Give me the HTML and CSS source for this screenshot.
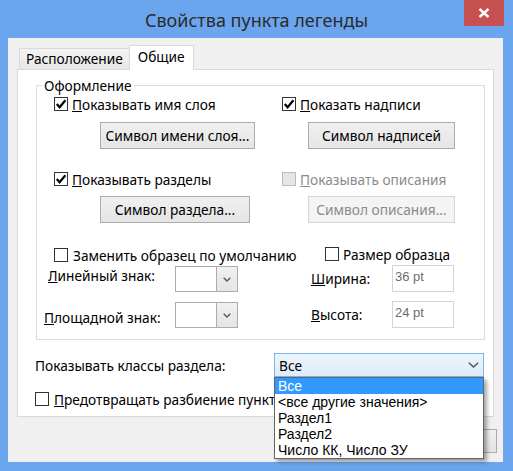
FILE: index.html
```html
<!DOCTYPE html>
<html lang="ru">
<head>
<meta charset="utf-8">
<title>Свойства пункта легенды</title>
<link rel="stylesheet" href="styles.css">
</head>
<body>
<div class="window">
  <div class="titlebar">
    <span class="spacer"></span>
    <div class="title">Свойства пункта легенды</div>
    <div class="close">
      <svg width="12" height="10" viewBox="0 0 12 10"><path d="M1.5 1 L10.5 9 M10.5 1 L1.5 9" stroke="#fff" stroke-width="2.4" fill="none"/></svg>
    </div>
  </div>
  <div class="client">
    <div class="tabs">
      <div class="tab">Расположение</div>
      <div class="tab active">Общие</div>
    </div>
    <div class="pane">
      <div class="group">
        <div class="legend">Оформление</div>

        <div class="row r1">
          <div class="cell left-cell">
            <div class="cb"><span class="box checked"><svg width="12" height="12" viewBox="0 0 12 12"><path d="M1.8 6 L4.6 9.2 L10.4 2.2" stroke="#000" stroke-width="2.2" fill="none"/></svg></span><span class="lbl"><u>П</u>оказывать имя слоя</span></div>
          </div>
          <div class="cell">
            <div class="cb"><span class="box checked"><svg width="12" height="12" viewBox="0 0 12 12"><path d="M1.8 6 L4.6 9.2 L10.4 2.2" stroke="#000" stroke-width="2.2" fill="none"/></svg></span><span class="lbl"><u>П</u>оказать надписи</span></div>
          </div>
        </div>

        <div class="row r2">
          <div class="cell"><div class="btn btn-left">Символ имени слоя...</div></div>
          <div class="cell"><div class="btn btn-right">Символ надписей</div></div>
        </div>

        <div class="row r3">
          <div class="cell left-cell">
            <div class="cb"><span class="box checked"><svg width="12" height="12" viewBox="0 0 12 12"><path d="M1.8 6 L4.6 9.2 L10.4 2.2" stroke="#000" stroke-width="2.2" fill="none"/></svg></span><span class="lbl"><u>П</u>оказывать разделы</span></div>
          </div>
          <div class="cell">
            <div class="cb disabled"><span class="box"></span><span class="lbl"><u>П</u>оказывать описания</span></div>
          </div>
        </div>

        <div class="row r4">
          <div class="cell"><div class="btn btn-left2">Символ раздела...</div></div>
          <div class="cell"><div class="btn btn-right disabled">Символ описания...</div></div>
        </div>

        <div class="row r5">
          <div class="cell left-cell">
            <div class="cb"><span class="box"></span><span class="lbl lbl-wide">Заменить образец по умолчанию</span></div>
          </div>
          <div class="cell size-cell">
            <div class="cb"><span class="box"></span><span class="lbl">Размер образца</span></div>
          </div>
        </div>

        <div class="row r6">
          <div class="cell flexcell">
            <span class="field-lbl lin"><u>Л</u>инейный знак:</span>
            <div class="mini-combo"><span class="mc-val"></span><span class="mc-btn"><svg width="8" height="5" viewBox="0 0 8 5"><path d="M0.7 0.7 L4 4 L7.3 0.7" stroke="#5a5a5a" stroke-width="1.4" fill="none"/></svg></span></div>
          </div>
          <div class="cell flexcell right-fields">
            <span class="dim-lbl"><u>Ш</u>ирина:</span>
            <div class="tbox">36 pt</div>
          </div>
        </div>

        <div class="row r7">
          <div class="cell flexcell">
            <span class="field-lbl plo"><u>П</u>лощадной знак:</span>
            <div class="mini-combo"><span class="mc-val"></span><span class="mc-btn"><svg width="8" height="5" viewBox="0 0 8 5"><path d="M0.7 0.7 L4 4 L7.3 0.7" stroke="#5a5a5a" stroke-width="1.4" fill="none"/></svg></span></div>
          </div>
          <div class="cell flexcell right-fields">
            <span class="dim-lbl"><u>В</u>ысота:</span>
            <div class="tbox">24 pt</div>
          </div>
        </div>
      </div>

      <div class="classes-row">
        <span class="classes-lbl">Показывать классы раздела:</span>
        <div class="big-combo">
          <span class="bc-val">Все</span>
          <svg class="bc-chev" width="11" height="6" viewBox="0 0 11 6"><path d="M0.8 0.8 L5.5 5 L10.2 0.8" stroke="#555" stroke-width="1.5" fill="none"/></svg>
          <ul class="dropdown">
            <li class="sel">Все</li>
            <li>&lt;все другие значения&gt;</li>
            <li>Раздел1</li>
            <li>Раздел2</li>
            <li>Число КК, Число ЗУ</li>
          </ul>
        </div>
      </div>

      <div class="cb prevent"><span class="box"></span><span class="lbl"><u>П</u>редотвращать разбиение пункт</span></div>
    </div>
    <div class="bottom-buttons">
      <div class="btn dlg-btn"></div>
    </div>
  </div>
</div>
</body>
</html>
```
FILE: styles.css
```css
* { box-sizing: border-box; }

body {
  margin: 0;
  font-family: "Noto Sans", "Liberation Sans", sans-serif;
  font-size: 13.7px;
  color: #000;
}

.window {
  width: 513px;
  height: 471px;
  background: #6ba5ed;
  display: flex;
  flex-direction: column;
  overflow: hidden;
}

.titlebar {
  height: 38px;
  flex: none;
  display: grid;
  grid-template-columns: 1fr auto 1fr;
  padding: 0 9px;
}

.title {
  font-size: 18px;
  line-height: 38px;
  margin-top: 1px;
  color: #2b2b2b;
  white-space: nowrap;
}

.close {
  justify-self: end;
  align-self: start;
  width: 40px;
  height: 26px;
  background: #c75050;
  display: flex;
  align-items: center;
  justify-content: center;
}

.client {
  flex: 1;
  margin: 0 10px 9px 8px;
  background: #f0f0f0;
  padding: 7px 9px 0 9px;
  display: flex;
  flex-direction: column;
}

.tabs {
  display: flex;
  align-items: flex-end;
  height: 24px;
  padding-left: 2px;
  flex: none;
}

.tab {
  height: 21px;
  line-height: 19px;
  padding: 0 6px;
  border: 1px solid #d9d9d9;
  border-bottom: none;
  background: linear-gradient(#f3f3f3, #e7e7e7);
  white-space: nowrap;
}

.tab.active {
  height: 25px;
  margin-bottom: -1px;
  line-height: 22px;
  padding: 0 8px;
  margin-left: -1px;
  background: #fff;
  position: relative;
  z-index: 1;
}

.pane {
  flex: none;
  height: 348px;
  background: #fff;
  border: 1px solid #d9d9d9;
  padding: 15px 8px 0 18px;
  display: flex;
  flex-direction: column;
}

.group {
  height: 255px;
  flex: none;
  border: 1px solid #dcdcdc;
  display: flex;
  flex-direction: column;
}

.legend {
  align-self: flex-start;
  margin: -9px 0 0 5px;
  padding: 0 2px;
  line-height: 17px;
  background: #fff;
}

.row {
  display: grid;
  grid-template-columns: 245px 1fr;
}

.cell { display: flex; align-items: center; }
.left-cell { padding-left: 17px; }

.r1 { margin-top: 1px; height: 18px; }
.r2 { margin-top: 9px; height: 27px; }
.r3 { margin-top: 21px; height: 18px; }
.r4 { margin-top: 8px; height: 27px; }
.r5 { margin-top: 23px; height: 18px; }
.r6 { margin-top: 1px; height: 27px; }
.r7 { margin-top: 9px; height: 27px; }

.cb {
  display: flex;
  align-items: center;
  gap: 4px;
  height: 18px;
  white-space: nowrap;
}

.box {
  width: 14px;
  height: 14px;
  border: 1px solid #333;
  background: #fff;
  display: flex;
  align-items: center;
  justify-content: center;
  flex: none;
}

.lbl { line-height: 17px; }
.lbl-wide { margin-left: 1px; }

.cb.disabled .box { border-color: #bcbcbc; background: #e6e6e6; }
.cb.disabled .lbl { color: #8b8b8b; }

.size-cell { padding-left: 43px; }
.size-cell .cb { margin-top: -2px; }

.btn {
  height: 27px;
  border: 1px solid #acacac;
  background: linear-gradient(#f0f0f0, #e5e5e5);
  display: flex;
  align-items: center;
  justify-content: center;
  white-space: nowrap;
}

.btn-left { margin-left: 63px; width: 155px; }
.btn-left2 { margin-left: 63px; width: 150px; }
.btn-right { margin-left: 26px; width: 147px; }
.btn.disabled {
  border-color: #d5d5d5;
  background: #f4f4f4;
  color: #8b8b8b;
}

.flexcell { align-items: flex-start; }

.field-lbl { line-height: 17px; white-space: nowrap; }
.lin { margin-left: 11px; width: 127px; margin-top: 2px; }
.plo { margin-left: 7px; width: 131px; margin-top: 8px; }

.mini-combo {
  margin-top: 1px;
  width: 63px;
  height: 26px;
  border: 1px solid #acacac;
  background: #fff;
  display: flex;
}

.mc-val { flex: 1; }

.mc-btn {
  width: 21px;
  border-left: 1px solid #acacac;
  background: linear-gradient(#f0f0f0, #e5e5e5);
  display: flex;
  align-items: center;
  justify-content: center;
}

.right-fields { padding-left: 29px; align-items: center; }
.dim-lbl { width: 81px; line-height: 17px; }

.tbox {
  width: 62px;
  height: 27px;
  border: 1px solid #d4d4d4;
  background: #fff;
  color: #6d6d6d;
  font-family: "Liberation Sans", Arial, sans-serif;
  font-size: 13px;
  line-height: 15px;
  padding: 3px 0 0 2px;
}

.classes-row {
  margin-top: 13px;
  height: 24px;
  display: flex;
  align-items: center;
}

.classes-lbl {
  width: 239px;
  margin-left: -1px;
  line-height: 17px;
  white-space: nowrap;
}

.big-combo {
  position: relative;
  width: 210px;
  height: 24px;
  border: 1px solid #7eb4ea;
  background: linear-gradient(#edf5fc, #dcecfc);
  display: flex;
  align-items: center;
  justify-content: space-between;
  padding: 0 4px 0 4px;
}

.bc-val { line-height: 17px; }

.dropdown {
  position: absolute;
  left: -1px;
  top: 23px;
  width: 210px;
  margin: 0;
  padding: 0;
  list-style: none;
  background: #fff;
  border: 1px solid #646464;
  box-shadow: 3px 3px 4px rgba(0, 0, 0, 0.35);
  z-index: 5;
  font-family: "Liberation Sans", Arial, sans-serif;
  font-size: 14px;
}

.dropdown li {
  height: 16px;
  line-height: 16px;
  padding-left: 3px;
  white-space: nowrap;
}

.dropdown li.sel { background: #3399ff; color: #fff; }

.prevent { margin-top: 13px; margin-left: -1px; gap: 5px; }

.bottom-buttons {
  display: flex;
  justify-content: flex-end;
  margin-top: 12px;
  margin-right: -3px;
}

.dlg-btn { width: 75px; height: 24px; }
```
